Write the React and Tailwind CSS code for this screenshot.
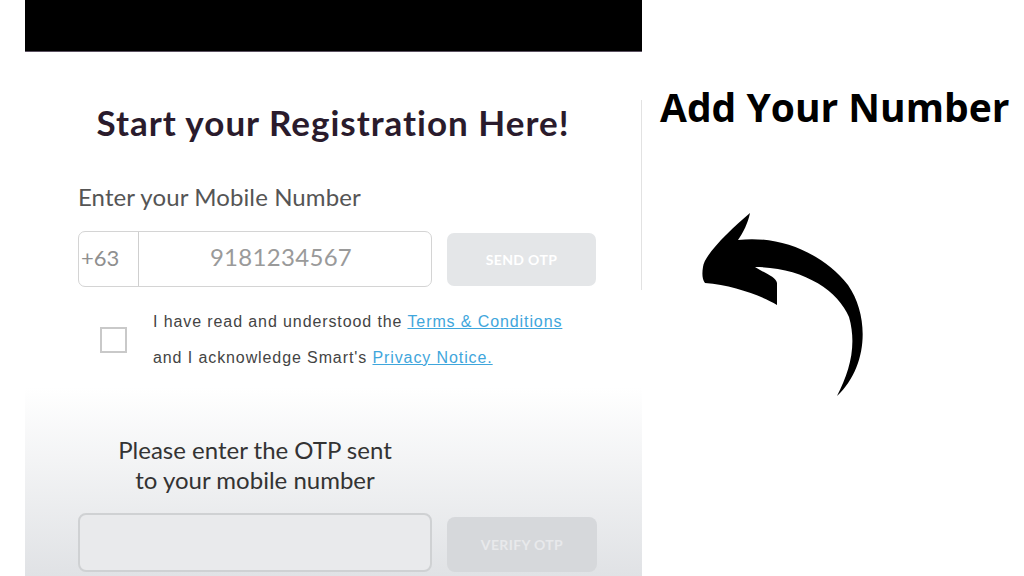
import React from "react";

const Arrow = () => (
  <svg width="170" height="195" viewBox="0 0 170 195" fill="#000">
    <path d="M3 62 C4 50 30 25 50 8 C48 18 43 28 38 35 C78 30 122 47 148 80 C170 112 168 162 137 191 C150 166 157 140 149 112 C138 85 102 62 55 62 C66 69 76 72 77 78 L77 100 C60 90 32 80 5 78 C2 74 2 68 3 62 Z" />
  </svg>
);

const App = () => {
  return (
    <div className="w-[1024px] h-[576px] bg-white flex overflow-hidden">
      {/* phone screenshot */}
      <div className="ml-[25px] w-[617px] h-full flex flex-col">
        <div className="h-[52px] bg-black border-b border-[#5a5060]" />
        <div className="flex-1 flex bg-[linear-gradient(to_bottom,#ffffff_64%,#e0e2e5)]">
          <div className="flex-1 flex flex-col font-['Lato',sans-serif]">
            <h1 className="mt-[50px] text-center text-[35px] leading-[40px] font-bold text-[#2a1b2c] tracking-[1px]">
              Start your Registration Here!
            </h1>

            <div className="pl-[53px] flex flex-col">
              <p className="mt-[41px] text-[24px] leading-[28px] text-[#555] tracking-[0.1px]">
                Enter your Mobile Number
              </p>

              <div className="mt-[20px] flex items-center">
                <div className="w-[354px] h-[56px] flex border border-[#d4d4d4] rounded-[7px] bg-white">
                  <div className="w-[60px] flex items-center pl-[2px] pb-[3px] border-r border-[#cfcfcf] text-[22px] text-[#8f8f8f]">
                    +63
                  </div>
                  <div className="flex-1 flex items-center justify-center pr-[8px] pb-[5px] text-[24px] text-[#9a9a9a] tracking-[0.3px]">
                    9181234567
                  </div>
                </div>
                <button className="ml-[15px] w-[149px] h-[53px] rounded-[7px] bg-[#e4e6e8] text-white text-[14px] font-bold tracking-wide">
                  SEND OTP
                </button>
              </div>

              <div className="mt-[17px] flex items-center font-['Liberation_Sans',sans-serif]">
                <div className="ml-[22px] w-[27px] h-[26px] border-2 border-[#c9c9c9] bg-white" />
                <div className="ml-[26px] text-[16px] leading-[36px] text-[#444] tracking-[0.9px]">
                  <p>
                    I have read and understood the{" "}
                    <a className="text-[#3fa6dc] underline">Terms &amp; Conditions</a>
                  </p>
                  <p>
                    and I acknowledge Smart's{" "}
                    <a className="text-[#3fa6dc] underline">Privacy Notice.</a>
                  </p>
                </div>
              </div>

              <div className="mt-[59px] w-[354px] text-center text-[24px] leading-[30px] text-[#333]">
                <p>Please enter the OTP sent</p>
                <p>to your mobile number</p>
              </div>

              <div className="mt-[18px] flex items-end">
                <div className="w-[354px] h-[59px] border-2 border-[#cfd1d3] rounded-[8px] bg-[#e9eaec]" />
                <button className="ml-[15px] w-[150px] h-[55px] rounded-[8px] bg-[#d6d8db] text-[#e8e9eb] text-[14px] font-bold tracking-wide">
                  VERIFY OTP
                </button>
              </div>
            </div>
          </div>
          <div className="w-px flex flex-col">
            <div className="mt-[48px] h-[190px] bg-[#e2e2e2]" />
          </div>
        </div>
      </div>

      {/* annotation */}
      <div className="ml-[18px] flex flex-col">
        <h2 className="mt-[84px] text-[39px] leading-[46px] font-bold text-black font-['Open_Sans',sans-serif] whitespace-nowrap">
          Add Your Number
        </h2>
        <div className="mt-[75px] ml-[40px]">
          <Arrow />
        </div>
      </div>
    </div>
  );
};

export default App;
